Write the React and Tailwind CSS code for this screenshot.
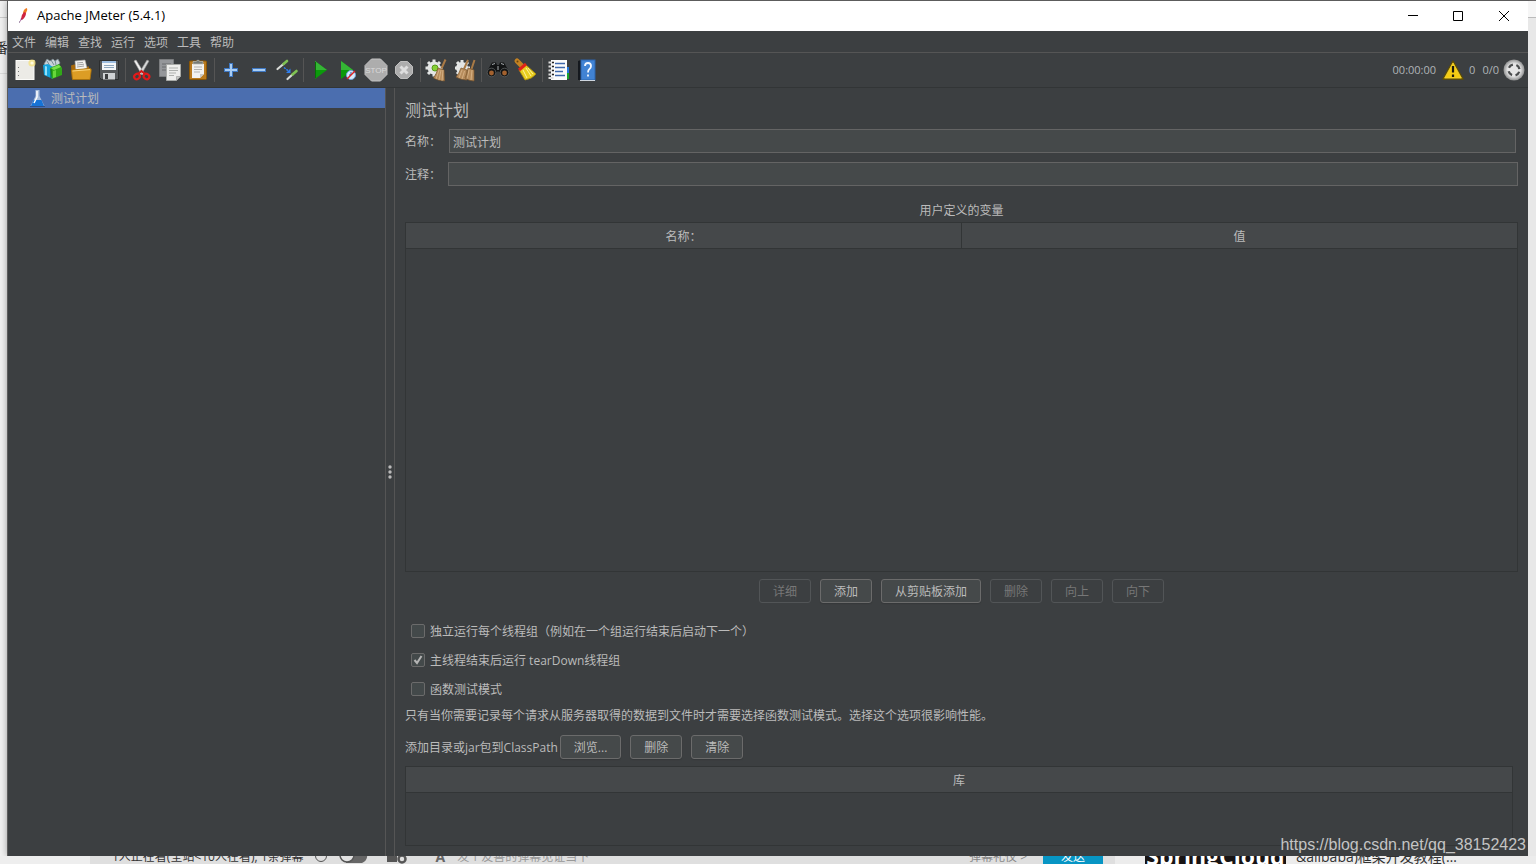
import React, { useState } from 'react';

const ICONS = {
	new: (
		<>
			<rect x="5" y="4.5" width="18" height="19" fill="#ecebe6" stroke="#fbfbf8" />
			<path d="M7.5 11v1M7.5 15v1M7.5 19v1" stroke="#777" />
			<circle cx="21" cy="7" r="3.6" fill="#f6e27c" opacity="0.75" />
			<circle cx="21" cy="7" r="1.6" fill="#fffbe0" />
		</>
	),
	templates: (
		<>
			<path d="M5 8l3-5 3 2 3-2 2 2 3-2 2 4-3 4H7z" fill="#c9d3d8" stroke="#78868c" strokeWidth="0.7" />
			<path d="M8 5l3 5M12 4l3 5M16 4l1 5" stroke="#647a85" strokeWidth="0.8" />
			<path d="M4 9l5-1 5 3v12l-9-4z" fill="#16a4dc" />
			<path d="M6 10l2 .6v9L6 19z" fill="#8fe0fa" />
			<path d="M11 12l9-4 3 4v7l-10 4z" fill="#31a818" />
			<path d="M12 12l8-3 2 2-7 3z" fill="#7be14d" />
			<path d="M14 15l3-1v7l-3 1z" fill="#67d73c" />
			<path d="M12 13v9" stroke="#0b6a17" />
		</>
	),
	open: (
		<>
			<path d="M4 9.500l3-1h4l2 2h9v12H5z" fill="#a8690a" />
			<path d="M8 5l10-1 2 8-11 4z" fill="#f4f4f2" stroke="#aaa" strokeWidth="0.6" />
			<path d="M10 7l6-.6M10 9l7-.8M10 11l7-1" stroke="#8d8d8d" strokeWidth="0.8" />
			<path d="M4.500 14L23 12.500q1.500 0 1.200 2L23 23.500H5.500z" fill="#dc9d25" stroke="#ad7208" strokeWidth="0.8" />
			<path d="M5.500 15l17.500-1.400" stroke="#fbd57d" />
		</>
	),
	save: (
		<>
			<path d="M4.500 4.500h19v19h-17l-2-2z" fill="#55585a" stroke="#2c2e2f" />
			<rect x="7" y="5" width="14" height="9" fill="#f2f5f8" />
			<rect x="7" y="5" width="14" height="2" fill="#9bbce0" />
			<path d="M9 9.500h10M9 11.500h10" stroke="#8ca5bd" />
			<rect x="8" y="17" width="12" height="6.500" fill="#cfd2d4" />
			<rect x="10" y="18" width="3" height="5" fill="#3b3d3f" />
		</>
	),
	cut: (
		<>
			<path d="M6 5l2-1 8 13-2 2z" fill="#f0f0f0" stroke="#a0a0a0" strokeWidth="0.6" />
			<path d="M21 5l-2-1-8 13 2 2z" fill="#d6d8d8" stroke="#8e8e8e" strokeWidth="0.6" />
			<ellipse cx="9" cy="20.500" rx="3" ry="2.500" fill="none" stroke="#e01b1b" strokeWidth="2.200" transform="rotate(-35 9 20.500)" />
			<ellipse cx="18.500" cy="20.500" rx="3" ry="2.500" fill="none" stroke="#e01b1b" strokeWidth="2.200" transform="rotate(35 18.500 20.500)" />
			<path d="M10 18l3.500-3 3.500 3" stroke="#d51616" strokeWidth="2" fill="none" />
		</>
	),
	copy: (
		<>
			<path d="M3.500 3.500h14v17h-14z" fill="#95979a" stroke="#7b7d7f" />
			<path d="M6 8h9M6 11h7M6 14h6" stroke="#6b6d6f" />
			<path d="M10.500 8.500h14v12l-4 4h-10z" fill="#eeeeec" stroke="#a9aba8" />
			<path d="M13 12h9M13 14.500h9M13 17h7M13 19.500h5" stroke="#aeb0ad" />
			<path d="M24.500 20.500h-4v4z" fill="#c6c8c4" stroke="#999" strokeWidth="0.6" />
		</>
	),
	paste: (
		<>
			<rect x="5.500" y="5" width="17" height="18.500" rx="1" fill="#b97a1e" stroke="#8a5606" />
			<path d="M8 8h12v10l-4 4H8z" fill="#f2f2f0" />
			<path d="M10 11h8M10 13.500h8M10 16h6" stroke="#b3b3b0" />
			<path d="M20 18h-4v4z" fill="#c9c9c5" />
			<path d="M9 8V5.500h3Q14 2.500 16 5.500h3V8z" fill="#777b76" stroke="#b5b8b3" strokeWidth="0.7" />
		</>
	),
	expand: (
		<>
			<path d="M14 7v14M7 14h14" stroke="#3f78c2" strokeWidth="4" />
			<path d="M14 8v12M8 14h12" stroke="#a9cdf3" strokeWidth="2" />
		</>
	),
	collapse: (
		<>
			<path d="M7 14h14" stroke="#3f78c2" strokeWidth="4" />
			<path d="M8 14h12" stroke="#a9cdf3" strokeWidth="2" />
		</>
	),
	toggle: (
		<>
			<path d="M4.500 13l6-5" stroke="#d8dbd8" strokeWidth="2.200" strokeLinecap="round" />
			<path d="M10.500 8L14 5" stroke="#7fc253" strokeWidth="2.600" strokeLinecap="round" />
			<path d="M14.500 23l5-4.500" stroke="#d8dbd8" strokeWidth="2.200" strokeLinecap="round" />
			<path d="M19.500 18.500l4-3.500" stroke="#7fc253" strokeWidth="2.600" strokeLinecap="round" />
			<path d="M11 11.500l4.500 3.500" stroke="#2f7ff0" strokeWidth="1.500" strokeDasharray="2 1" />
			<path d="M17.500 12.500v4.500H13z" fill="#2f7ff0" />
		</>
	),
	start: (
		<>
			<path d="M9 5l12 9-12 9z" fill="#0b9a0b" />
			<path d="M9 5l12 9H9z" fill="#35b535" />
			<path d="M9.500 6v16" stroke="#067006" />
		</>
	),
	startNoPause: (
		<>
			<path d="M7 5l12 9-12 9z" fill="#0b9a0b" />
			<path d="M7 5l12 9H7z" fill="#35b535" />
			<circle cx="17" cy="19" r="4.500" fill="#d7e9fb" stroke="#6ea3dc" />
			<path d="M17 16v3h-2" stroke="#2b5fa5" fill="none" />
			<path d="M13 23l8-8" stroke="#df2020" strokeWidth="1.500" />
		</>
	),
	stop: (
		<>
			<path d="M9.500 3h9L25 9.500v9L18.500 25h-9L3 18.500v-9z" fill="#adadad" stroke="#c4c4c4" />
			<text x="14" y="17" textAnchor="middle" fontSize="8" fontFamily="Liberation Sans, sans-serif" fill="#dadada">STOP</text>
		</>
	),
	shutdown: (
		<>
			<path d="M10.500 5.500h7l5 5v7l-5 5h-7l-5-5v-7z" fill="#adadad" stroke="#bfbfbf" />
			<path d="M10.500 10.500l7 7M17.500 10.500l-7 7" stroke="#dedede" strokeWidth="3" />
		</>
	),
	clear: (
		<>
			<circle cx="11" cy="12" r="6.500" fill="#e9ebea" />
			<path d="M11 3.500v17M2.500 12h17M5 6l12 12M17 6L5 18" stroke="#e3e5e4" strokeWidth="3" />
			<circle cx="12" cy="12" r="3" fill="#86cf35" stroke="#579a1a" />
			<path d="M22.500 3.500l-4 9" stroke="#a97a46" strokeWidth="2" />
			<path d="M15 12l6 2 .5 11q-6 0-11-3 3-4 4.500-10z" fill="#b78c5c" stroke="#80592e" strokeWidth="0.7" />
			<path d="M16 14l-3 9M18 14l-2 10M20 14l-1 11" stroke="#dbb78b" strokeWidth="0.8" />
		</>
	),
	clearAll: (
		<>
			<circle cx="11" cy="12" r="6" fill="#e9ebea" />
			<path d="M11 4v16M4 12h15M6 6l11 12M17 6L6 18" stroke="#e3e5e4" strokeWidth="3" />
			<path d="M17 4l-4 9M23.500 4l-3 9" stroke="#a97a46" strokeWidth="2" />
			<path d="M10 12l6 2v10q-6 0-11-3 3-3 5-9zM17 12l6 2v11q-5 0-9-3 2-4 3-10z" fill="#b78c5c" stroke="#80592e" strokeWidth="0.7" />
			<path d="M11 14l-3 8M13.500 15L11 23M18 14l-2 9M21 14l-1 10" stroke="#dbb78b" strokeWidth="0.8" />
		</>
	),
	search: (
		<>
			<path d="M8 6.500h4l1 2.500h2l1-2.500h4l5 9-2 4h-5l-3-4h-2l-3 4H5l-2-4z" fill="#121415" />
			<circle cx="7.500" cy="16.500" r="4.300" fill="#121415" stroke="#5f6365" strokeWidth="0.8" />
			<circle cx="20.500" cy="16.500" r="4.300" fill="#121415" stroke="#5f6365" strokeWidth="0.8" />
			<circle cx="7.500" cy="17" r="2.400" fill="#a4622f" />
			<circle cx="20.500" cy="17" r="2.400" fill="#a4622f" />
			<path d="M8 8.500l3-1M17 7.500l3 1M14 10v4" stroke="#a8adb0" />
		</>
	),
	searchReset: (
		<>
			<path d="M5 5l6 6" stroke="#c48222" strokeWidth="5" strokeLinecap="round" />
			<circle cx="5.500" cy="5.500" r="1" fill="#6b430b" />
			<path d="M7 14l7-5 10 9q-4 5-11 6z" fill="#e9ce20" stroke="#a98d08" strokeWidth="0.8" />
			<path d="M11 14l4 8M14 12l5 8M16 12l5 6" stroke="#fff29a" />
			<path d="M7 14l7-6" stroke="#e02419" strokeWidth="3" />
		</>
	),
	functions: (
		<>
			<path d="M21 11h3v6h-3z" fill="#2477dd" />
			<path d="M21 17h3v6h-3z" fill="#19a329" />
			<rect x="6" y="4" width="16" height="20" fill="#fbfbfb" />
			<path d="M10 7.500h10M10 11.500h10M10 15.500h8M10 19.500h10" stroke="#3f68ac" strokeWidth="1.400" />
			<path d="M3.500 6.500h5M3.500 10.500h5M3.500 14.500h5M3.500 18.500h5M3.500 22h5" stroke="#dedede" strokeWidth="2" />
			<path d="M7 6.500h2M7 10.500h2M7 14.500h2M7 18.500h2" stroke="#222" strokeWidth="1.500" />
		</>
	),
	help: (
		<>
			<path d="M5 5l3-1v20H5z" fill="#15191e" />
			<rect x="8" y="4" width="14" height="20" fill="#4183d4" stroke="#2c65ad" />
			<path d="M7 24.500h15" stroke="#cfd6de" />
			<path d="M12 10q0-3 3-3t3 3q0 2-1.500 3T15 16.500M15 18.500v2" stroke="#f3f8ff" strokeWidth="1.800" fill="none" />
		</>
	),
};

// null = separator
const TOOLBAR = [
	['new', '新建'], ['templates', '模板'], ['open', '打开'], ['save', '保存'],
	null,
	['cut', '剪切'], ['copy', '复制'], ['paste', '粘贴'],
	null,
	['expand', '全部展开'], ['collapse', '全部折叠'], ['toggle', '切换'],
	null,
	['start', '启动'], ['startNoPause', '不停顿开始'], ['stop', '停止'], ['shutdown', '关闭'],
	null,
	['clear', '清除'], ['clearAll', '清除全部'],
	null,
	['search', '查找'], ['searchReset', '重置搜索'],
	null,
	['functions', '函数助手'], ['help', '帮助'],
];

const MENUS = ['文件', '编辑', '查找', '运行', '选项', '工具', '帮助'];

const Button = ({ children, disabled }) => (
	<button
		disabled={disabled}
		className="h-6 px-[13px] pt-0.5 border border-[#6b6b6b] bg-[#45494a] rounded-[3px] shadow-[0_1px_1px_#35383a] leading-5 whitespace-nowrap hover:bg-[#4c5052] disabled:border-[#525557] disabled:bg-transparent disabled:text-[#777] disabled:shadow-none"
	>
		{children}
	</button>
);

const Checkbox = ({ label, initial = false }) => {
	const [checked, setChecked] = useState(initial);
	return (
		<label className="flex items-center gap-[5px] h-5">
			<span className="grid shrink-0">
				<input
					type="checkbox"
					checked={checked}
					onChange={(e) => setChecked(e.target.checked)}
					className="col-start-1 row-start-1 appearance-none w-3.5 h-3.5 border border-[#6b6b6b] bg-[#43494a] rounded-[2px]"
				/>
				{checked && (
					<svg viewBox="0 0 14 14" className="col-start-1 row-start-1 w-3.5 h-3.5 pointer-events-none">
						<path d="M3.500 7l2.500 3 4.500-7" fill="none" stroke="#b5b5b5" strokeWidth="2" />
					</svg>
				)}
			</span>
			<span className="pt-0.5">{label}</span>
		</label>
	);
};

const TitleBar = () => (
	<header className="flex items-center justify-between h-[30px] shrink-0 bg-white text-black">
		<div className="flex items-center gap-[3px] pl-1.5">
			<svg viewBox="0 0 20 20" className="w-5 h-5">
				<path d="M9 8q0-5 4-6 1 2-1 5z" fill="#ef7d22" />
				<path d="M7 13q0-4 3-7l2 1q0 4-4 7z" fill="#cf2440" />
				<path d="M6 16l1-4 1 1z" fill="#7d2370" />
				<path d="M5 16h1" stroke="#5d3369" />
			</svg>
			<h1 className="text-[13px]">Apache JMeter (5.4.1)</h1>
		</div>
		<div className="flex h-full">
			<button aria-label="最小化" className="w-[46px] flex items-center justify-center">
				<svg viewBox="0 0 10 10" className="w-2.5 h-2.5"><path d="M0 4.500h10" stroke="#000" /></svg>
			</button>
			<button aria-label="最大化" className="w-11 flex items-center justify-center">
				<svg viewBox="0 0 10 10" className="w-2.5 h-2.5"><path d="M.5.5h9v9h-9z" fill="none" stroke="#000" /></svg>
			</button>
			<button aria-label="关闭窗口" className="w-12 flex items-center justify-center">
				<svg viewBox="0 0 10 10" className="w-2.5 h-2.5"><path d="M0 0l10 10M10 0L0 10" stroke="#000" /></svg>
			</button>
		</div>
	</header>
);

const Toolbar = () => (
	<div className="flex items-center justify-between h-[35px] shrink-0 px-[3px] border-b border-[#323536]">
		<div className="flex items-center">
			{TOOLBAR.map((item, i) =>
				item ? (
					<button key={item[0]} aria-label={item[1]} className="w-7 h-7">
						<svg viewBox="0 0 28 28" className="w-7 h-7">{ICONS[item[0]]}</svg>
					</button>
				) : (
					<span key={i} className="w-px h-6 mx-0.5 bg-[#555]" />
				)
			)}
		</div>
		<div className="flex items-center text-[11px] text-[#b0b4b7]">
			<span>00:00:00</span>
			<svg viewBox="0 0 22 20" className="w-[22px] h-5 ml-1.5 mr-[5px]">
				<path d="M11 0.800l10.300 18.400H.7z" fill="#8a7406" stroke="#5e4c00" strokeLinejoin="round" />
				<path d="M11 3l8.300 15H2.700z" fill="#f6cd12" stroke="#f9d93b" strokeWidth="0.7" />
				<path d="M11 6v6.500M11 14.500V17" stroke="#1c1a10" strokeWidth="2.200" />
			</svg>
			<span>0</span>
			<span className="ml-[7px]">0/0</span>
			<svg viewBox="0 0 22 22" className="w-[22px] h-[22px] ml-1">
				<defs>
					<radialGradient id="knob">
						<stop offset="0.6" stopColor="#e6e6e6" />
						<stop offset="1" stopColor="#8f9090" />
					</radialGradient>
				</defs>
				<circle cx="11" cy="11" r="10.500" fill="url(#knob)" />
				<circle cx="11" cy="11" r="5.500" fill="none" stroke="#4a4c4d" strokeWidth="2.300" strokeDasharray="5 3.640" strokeDashoffset="-1.820" />
			</svg>
		</div>
	</div>
);

const TestPlan = () => {
	const [name, setName] = useState('测试计划');
	const [comment, setComment] = useState('');
	return (
		<main className="flex flex-col flex-1 min-w-0 px-2.5 pt-[13px] pb-2.5">
			<h2 className="text-base leading-[18px] mb-2.5">测试计划</h2>
			<div className="flex items-center gap-2 mb-[9px] pr-0.5">
				<label htmlFor="plan-name" className="w-9 pt-0.5 shrink-0">名称：</label>
				<input
					id="plan-name"
					value={name}
					onChange={(e) => setName(e.target.value)}
					className="flex-1 min-w-0 h-6 px-[3px] pt-0.5 bg-[#45494a] border border-[#646464] outline-none"
				/>
			</div>
			<div className="flex items-center gap-[7px]">
				<label htmlFor="plan-comment" className="w-9 pt-0.5 shrink-0">注释：</label>
				<input
					id="plan-comment"
					value={comment}
					onChange={(e) => setComment(e.target.value)}
					className="flex-1 min-w-0 h-6 px-[3px] pt-0.5 bg-[#45494a] border border-[#646464] outline-none"
				/>
			</div>

			<h3 id="vars-title" className="mt-[15px] mb-px text-center leading-5">用户定义的变量</h3>
			<div className="flex-1 min-h-20 border border-[#323536]">
				<table aria-labelledby="vars-title" className="w-full table-fixed">
					<thead className="bg-[#45484a]">
						<tr className="h-[25px] border-b border-[#323536]">
							<th className="pt-[3px] pb-0 font-normal border-r border-[#323536]">名称：</th>
							<th className="pt-[3px] pb-0 font-normal">值</th>
						</tr>
					</thead>
				</table>
			</div>
			<div className="flex justify-center gap-[9px] mt-[7px]">
				<Button disabled>详细</Button>
				<Button>添加</Button>
				<Button>从剪贴板添加</Button>
				<Button disabled>删除</Button>
				<Button disabled>向上</Button>
				<Button disabled>向下</Button>
			</div>

			<div className="flex flex-col items-start gap-[9px] mt-[18px] pl-1.5">
				<Checkbox label="独立运行每个线程组（例如在一个组运行结束后启动下一个）" />
				<Checkbox label="主线程结束后运行 tearDown线程组" initial />
				<Checkbox label="函数测试模式" />
			</div>
			<p className="mt-[7px] leading-5">
				只有当你需要记录每个请求从服务器取得的数据到文件时才需要选择函数测试模式。选择这个选项很影响性能。
			</p>

			<div className="flex items-center gap-0.5 mt-[9px]">
				<span className="pt-0.5">添加目录或jar包到ClassPath</span>
				<div className="flex gap-[9px]">
					<Button>浏览...</Button>
					<Button>删除</Button>
					<Button>清除</Button>
				</div>
			</div>
			<div className="h-20 mt-[7px] mr-[5px] border border-[#323536] shrink-0">
				<table className="w-full">
					<thead className="bg-[#45484a]">
						<tr className="h-[25px] border-b border-[#323536]">
							<th className="pt-[3px] pb-0 font-normal">库</th>
						</tr>
					</thead>
				</table>
			</div>
		</main>
	);
};

// The web page that shows below the window
const PageBehind = () => (
	<div className="flex items-end h-2 shrink-0 overflow-hidden bg-[#dfdfdf] text-xs leading-[14px] whitespace-nowrap text-[#333]">
		<span className="w-[90px] h-2 shrink-0 bg-[#eee]" />
		<span className="pl-[22px]">1人正在看(全站&lt;10人在看), 1条弹幕</span>
		<svg viewBox="0 0 100 14" className="w-[100px] h-3.5 ml-2.5 shrink-0">
			<circle cx="7" cy="6" r="5.500" fill="none" stroke="#555" />
			<path d="M32 -2h16a8 8 0 0 1 0 15H32z" fill="#666" />
			<circle cx="33" cy="5" r="7" fill="#e2e2e2" stroke="#555" strokeWidth="1.500" />
			<path d="M73 2h10v10H73z" fill="#555" />
			<circle cx="88" cy="9" r="3.500" fill="none" stroke="#555" strokeWidth="2.500" />
		</svg>
		<span className="ml-[22px] font-bold text-sm leading-[14px] text-[#666]">A</span>
		<span className="ml-3 text-[#999]">发个友善的弹幕见证当下</span>
		<span className="ml-auto text-[#888]">弹幕礼仪 &gt;</span>
		<span className="ml-4 w-[60px] text-center bg-[#0795c4] text-white">发送</span>
		<span className="w-[421px] h-2 flex items-end bg-[#ececec] ml-3 pl-[30px]">
			<b className="w-[141px] text-[23px] text-center leading-4 text-white bg-[#181414]">SpringCloud</b>
			<span className="ml-2.5 text-sm leading-[14px]">&amp;alibaba)框架开发教程(…</span>
		</span>
	</div>
);

export default function App() {
	return (
		<div className="relative flex flex-col h-screen overflow-hidden bg-[#e8e8e8] text-xs text-[#bbb] font-['Open_Sans','Noto_Sans_CJK_SC',sans-serif]">
			<div className="h-px shrink-0 bg-[#6b6868]" />
			<div className="flex flex-1 min-h-0">
				<div className="flex flex-col w-2 shrink-0 bg-[#f2f2f2]">
					<div className="h-[17px] border-b border-[#ccc]" />
					<div className="flex justify-end h-14 pt-5 overflow-hidden border-b border-[#ddd] text-sm text-[#333]">番</div>
				</div>
				<div className="flex flex-col flex-1 min-w-0 bg-[#3c3f41] shadow-[0_0_8px_rgba(0,0,0,0.45)] outline outline-[#5c5c5c]">
					<TitleBar />
					<nav className="flex items-center gap-[9px] h-[22px] shrink-0 pl-1 pt-0.5 border-b border-[#555]">
						{MENUS.map((m) => (
							<button key={m}>{m}</button>
						))}
					</nav>
					<Toolbar />
					<div className="flex flex-1 min-h-0">
						<aside className="w-[378px] shrink-0 border-r border-[#555]">
							<button className="flex items-center w-full h-5 pl-[21px] gap-1 bg-[#4b6eaf]">
								<svg viewBox="0 0 18 20" className="w-[18px] h-5">
									<path d="M6.500 2h4v6l5 10H1.500l5-10z" fill="#b9cce4" opacity="0.85" />
									<path d="M4.500 12h8l2.500 6H2z" fill="#1673d6" />
									<path d="M8 3v6l-3 6" stroke="#fff" strokeWidth="1.500" fill="none" />
									<path d="M1 18.500h15" stroke="#2c518c" />
								</svg>
								<span className="pt-0.5">测试计划</span>
							</button>
						</aside>
						<div className="flex items-center justify-center w-[9px] shrink-0 border-r border-[#555]">
							<svg viewBox="0 0 4 14" className="w-1 h-3.5">
								<circle cx="2" cy="2" r="1.700" fill="#bbb" />
								<circle cx="2" cy="7" r="1.700" fill="#bbb" />
								<circle cx="2" cy="12" r="1.700" fill="#bbb" />
							</svg>
						</div>
						<TestPlan />
					</div>
				</div>
				<div className="w-2 shrink-0 bg-[#e8e8e8]">
					<div className="h-[17px] bg-[#f6f6f6] border-b border-[#bbb]" />
				</div>
			</div>
			<PageBehind />
			<span className="absolute right-2.5 bottom-2 text-base leading-[22px] text-[#c4c4c4] font-['Liberation_Sans',sans-serif]">
				https://blog.csdn.net/qq_38152423
			</span>
		</div>
	);
}
